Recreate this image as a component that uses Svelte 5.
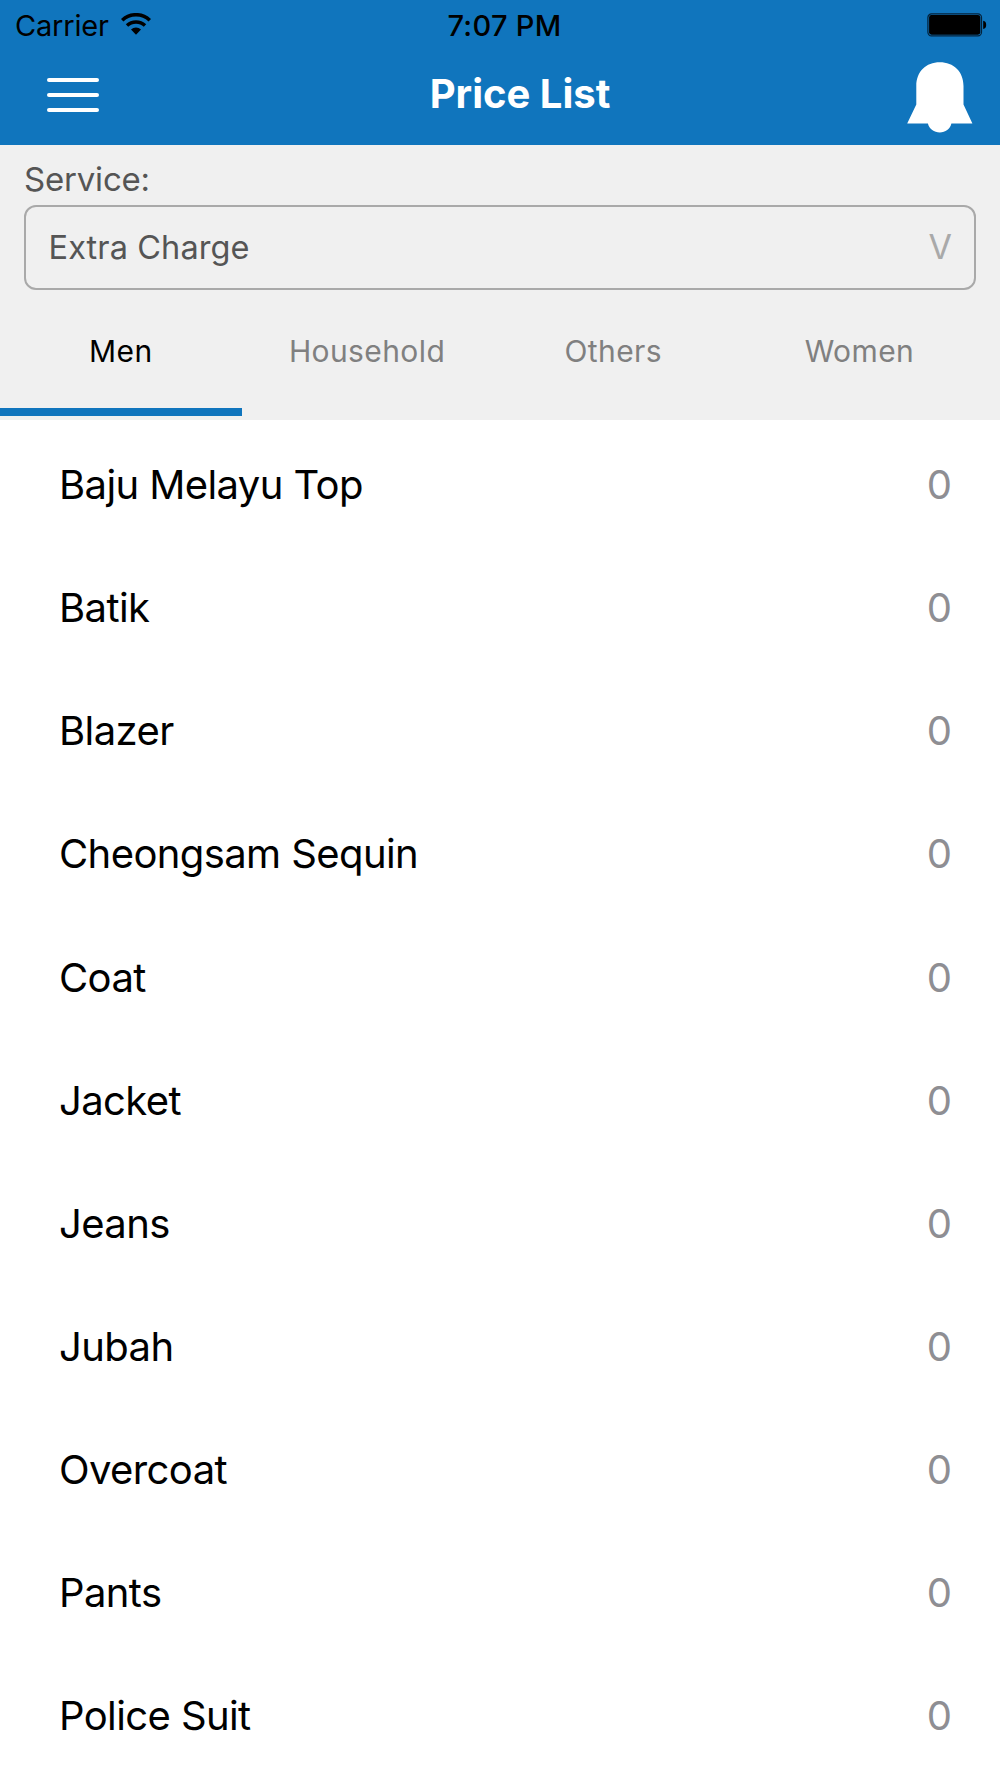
<script lang="ts">
    type Item = { name: string; price: number };

    const tabs = ["Men", "Household", "Others", "Women"];
    const items: Item[] = [
        { name: "Baju Melayu Top", price: 0 },
        { name: "Batik", price: 0 },
        { name: "Blazer", price: 0 },
        { name: "Cheongsam Sequin", price: 0 },
        { name: "Coat", price: 0 },
        { name: "Jacket", price: 0 },
        { name: "Jeans", price: 0 },
        { name: "Jubah", price: 0 },
        { name: "Overcoat", price: 0 },
        { name: "Pants", price: 0 },
        { name: "Police Suit", price: 0 },
    ];

    let activeTab = $state("Men");
</script>

<div class="screen">
    <header class="header">
        <div class="status-bar">
            <div class="carrier">
                <span class="carrier-name">Carrier</span>
                <svg class="wifi" viewBox="0 0 30 22" width="30" height="22">
                    <path d="M1.2 7.2a20 20 0 0 1 27.6 0" fill="none" stroke="#000" stroke-width="3.5" />
                    <path d="M6 12.6a13 13 0 0 1 18 0" fill="none" stroke="#000" stroke-width="3.4" />
                    <path d="M10 16.6a7.2 7.2 0 0 1 10 0L15 21.8z" />
                </svg>
            </div>
            <span class="time">7:07 PM</span>
            <svg class="battery" viewBox="0 0 60 24" width="60" height="24">
                <rect x="0.9" y="0.9" width="53.6" height="22" rx="3.6" fill="none" stroke="#04223a" stroke-width="1.2" />
                <rect x="2.1" y="2.1" width="51.2" height="19.6" rx="2.4" />
                <path d="M56.2 7.8q3 .6 3 4.1t-3 4.1z" />
            </svg>
        </div>
        <div class="nav-bar">
            <button class="menu" aria-label="Menu">
                <span></span>
                <span></span>
                <span></span>
            </button>
            <h1>Price List</h1>
            <button class="bell" aria-label="Notifications">
                <svg viewBox="0 0 66 71" width="66" height="71">
                    <path
                        d="M9.3 24C9.3 9.5 19 .3 32.8 .3S56.5 9.5 56.5 24V42.5L65.4 61.6H44.4C43.2 67 38.4 70.5 32.8 70.5S22.2 67 20.9 61.6H.2L9.3 42.5z"
                        fill="#fff"
                    />
                </svg>
            </button>
        </div>
    </header>

    <section class="filters">
        <span class="service-label">Service:</span>
        <div class="select">
            <span class="select-value">Extra Charge</span>
            <span class="select-arrow">V</span>
        </div>
        <nav class="tabs">
            {#each tabs as tab}
                <button
                    class="tab"
                    class:active={tab === activeTab}
                    onclick={() => (activeTab = tab)}
                >
                    {tab}
                </button>
            {/each}
        </nav>
    </section>

    <ul class="list">
        {#each items as item}
            <li class="row">
                <span class="name">{item.name}</span>
                <span class="price">{item.price}</span>
            </li>
        {/each}
    </ul>
</div>

<style>
    :global(body) {
        margin: 0;
        background: #fff;
    }

    .screen {
        width: 1000px;
        height: 1778px;
        overflow: hidden;
        background: #fff;
        font-family: Inter, "Liberation Sans", sans-serif;
        color: #000;
    }

    button {
        padding: 0;
        border: 0;
        background: none;
        font: inherit;
    }

    .header {
        height: 145px;
        background: #1075bd;
    }

    .status-bar {
        display: grid;
        grid-template-columns: 1fr auto 1fr;
        align-items: center;
        height: 50px;
        padding: 0 13px 0 15px;
        font-size: 29px;
    }

    .carrier {
        display: flex;
        align-items: center;
        gap: 12px;
    }

    .carrier-name {
        letter-spacing: -0.2px;
    }

    .wifi {
        margin-bottom: 3px;
    }

    .time {
        padding-left: 7px;
        font-weight: 500;
        letter-spacing: 0.3px;
    }

    .battery {
        justify-self: end;
        margin-bottom: 1px;
    }

    .nav-bar {
        display: grid;
        grid-template-columns: 1fr auto 1fr;
        align-items: center;
        height: 88px;
        padding: 0 27px 0 47px;
    }

    .menu {
        display: flex;
        flex-direction: column;
        gap: 11px;
        width: 52px;
        margin-top: 1px;
    }

    .menu span {
        height: 4px;
        border-radius: 2px;
        background: #fff;
    }

    h1 {
        margin: 0 0 2px 20px;
        color: #fff;
        font-size: 40px;
        font-weight: 700;
    }

    .bell {
        justify-self: end;
        height: 71px;
        margin-top: 6px;
    }

    .bell svg {
        display: block;
    }

    .filters {
        display: flex;
        flex-direction: column;
        box-sizing: border-box;
        height: 275px;
        padding-top: 15px;
        background: #f0f0f0;
    }

    .service-label {
        height: 45px;
        padding-left: 24px;
        color: #555;
        font-size: 33px;
        letter-spacing: -0.2px;
        line-height: 39px;
    }

    .select {
        display: flex;
        align-items: center;
        justify-content: space-between;
        box-sizing: border-box;
        height: 85px;
        margin: 0 24px;
        padding: 0 22px 0 22.5px;
        border: 2px solid #a9a9a9;
        border-radius: 12px;
        color: #555;
        font-size: 32.5px;
    }

    .select-value {
        letter-spacing: 0.1px;
    }

    .select-arrow {
        margin-bottom: 3px;
        color: #a9a9a9;
        font-size: 34px;
        font-weight: 400;
    }

    .tabs {
        display: flex;
        gap: 4.5px;
        height: 126px;
    }

    .tab {
        box-sizing: border-box;
        width: 241.7px;
        height: 126px;
        padding-top: 4px;
        border-bottom: 8px solid transparent;
        color: #808080;
        font-size: 30px;
        letter-spacing: 0.4px;
    }

    .tab.active {
        border-color: #1075bd;
        color: #000;
    }

    .list {
        margin: 0;
        padding: 3px 0 0;
        list-style: none;
    }

    .row {
        display: flex;
        align-items: center;
        justify-content: space-between;
        height: 123.15px;
        padding: 0 48px 0 59px;
        font-size: 40px;
    }

    .name {
        letter-spacing: -0.6px;
    }

    .price {
        color: #8e8e93;
        font-weight: 400;
    }
</style>
